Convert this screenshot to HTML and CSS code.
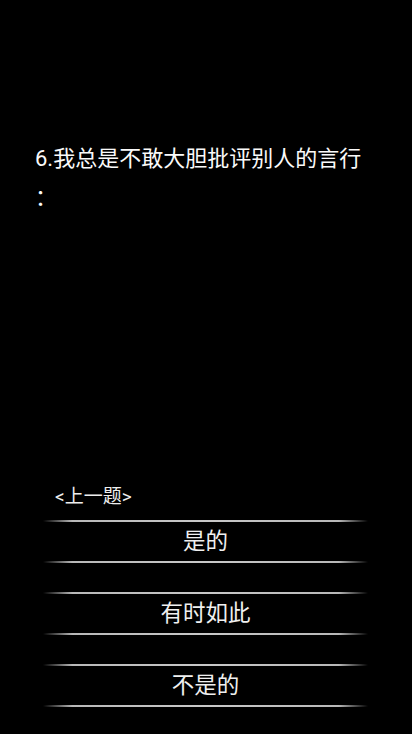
FILE: index.html
```html
<!DOCTYPE html>
<html lang="zh-CN">
<head>
<meta charset="utf-8">
<title>测试</title>
<link rel="stylesheet" href="styles.css">
</head>
<body>
<div class="page">
  <div class="question">6.我总是不敢大胆批评别人的言行：</div>
  <div class="spacer"></div>
  <div class="footer">
    <div class="prev">&lt;上一题&gt;</div>
    <div class="options">
      <div class="option">是的</div>
      <div class="option">有时如此</div>
      <div class="option">不是的</div>
    </div>
  </div>
</div>
</body>
</html>
```
FILE: styles.css
```css
html, body {
  margin: 0;
  padding: 0;
  background: #000;
}
body {
  font-family: Roboto, "Noto Sans CJK SC", sans-serif;
  color: #f2f2f2;
}
.page {
  height: 734px;
  display: flex;
  flex-direction: column;
  box-sizing: border-box;
  padding-bottom: 27px;
}
.question {
  padding: 139px 35px 0 35px;
  font-size: 22px;
  line-height: 39px;
  line-break: anywhere;
  word-spacing: 0;
  color: #fafafa;
}
.spacer {
  flex: 1;
}
.footer {
  display: flex;
  flex-direction: column;
}
.prev {
  padding-left: 55px;
  font-size: 19px;
  line-height: 24px;
  color: #eee;
  margin-bottom: 11px;
}
.options {
  display: flex;
  flex-direction: column;
  gap: 29px;
  margin: 0 44px 0 43px;
}
.option {
  position: relative;
  height: 43px;
  line-height: 42px;
  text-align: center;
  font-size: 22.5px;
  color: #f0f0f0;
}
.option::before,
.option::after {
  content: "";
  position: absolute;
  left: 0;
  right: 0;
  height: 2px;
  background: linear-gradient(to right, rgba(190,190,190,0), #b8b8b8 9%, #c8c8c8 50%, #b8b8b8 91%, rgba(190,190,190,0));
}
.option::before { top: 0; }
.option::after { bottom: 0; }
```
